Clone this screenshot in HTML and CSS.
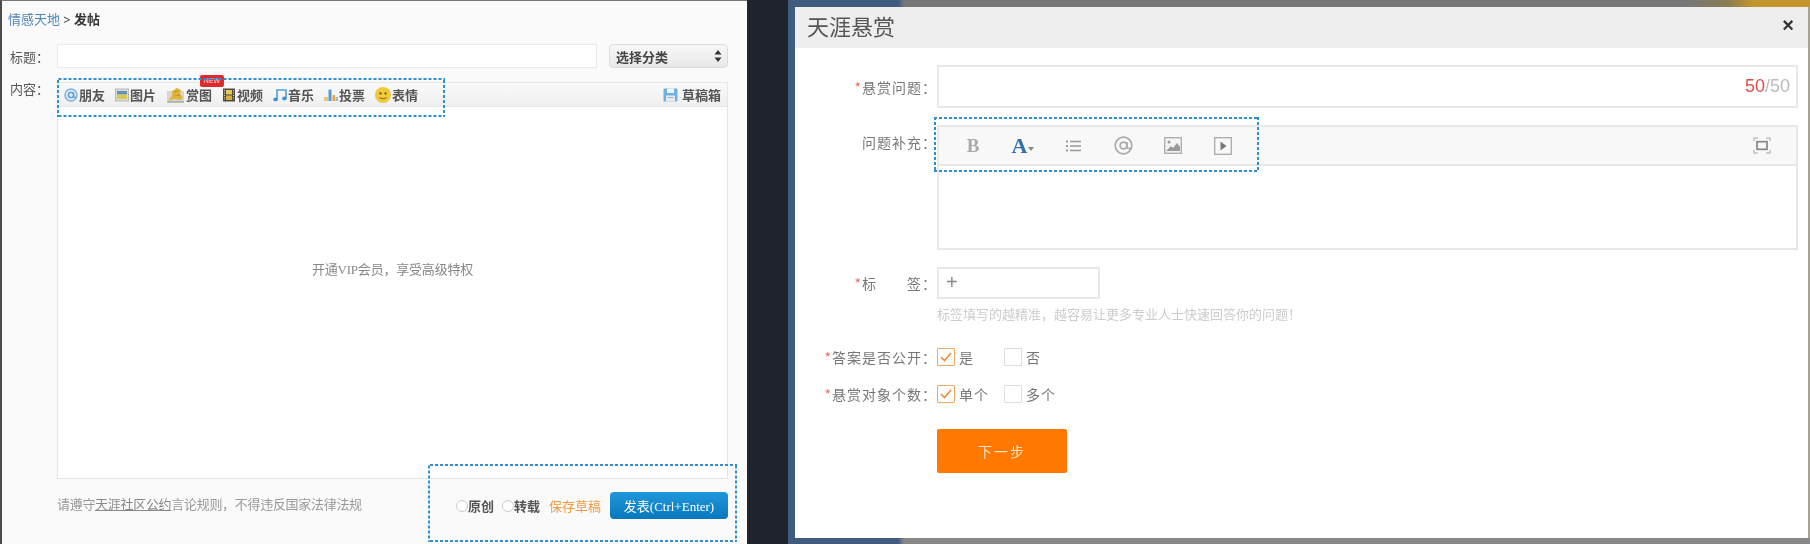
FILE: index.html
```html
<!DOCTYPE html>
<html lang="zh-CN">
<head>
    <meta charset="UTF-8">
    <meta name="viewport" content="width=device-width, initial-scale=1.0">
    <title>发帖与天涯悬赏</title>
    <link rel="stylesheet" href="styles.css">
</head>

<body>

    <div class="post-panel">
        <div class="breadcrumb"><a class="crumb-link">情感天地</a> <b>&gt; 发帖</b></div>

        <div class="post-row">
            <span class="post-label">标题&#65306;</span>
            <input type="text" class="post-title">
            <div class="category-select">
                <span>选择分类</span>
                <svg width="8" height="12" viewBox="0 0 8 12"><path d="M4 0 L7.5 4.5 H0.5 Z M4 12 L0.5 7.5 H7.5 Z" fill="#333"/></svg>
            </div>
        </div>

        <div class="post-row content-row">
            <span class="post-label">内容&#65306;</span>
            <div class="post-editor">
                <div class="post-toolbar">
                    <span class="tool">
                        <svg class="tool-icon" viewBox="0 0 14 14"><circle cx="7" cy="7" r="6" fill="#dbe9f5" stroke="#7fb4e0" stroke-width="1.5"/><circle cx="7" cy="7" r="2.6" fill="none" stroke="#5b9bd5" stroke-width="1.4"/><path d="M9.6 4.5 V8.5 Q10 10 12 9" fill="none" stroke="#5b9bd5" stroke-width="1.2"/></svg>
                        朋友
                    </span>
                    <span class="tool">
                        <svg class="tool-icon" viewBox="0 0 14 14"><rect x="0.5" y="1" width="13" height="12" fill="#d8dadc" stroke="#b5b8bb"/><rect x="2" y="3" width="10" height="3.5" fill="#5f93b8"/><rect x="2" y="6.5" width="10" height="4.5" fill="#d8c94e"/></svg>
                        图片
                    </span>
                    <span class="tool">
                        <svg class="tool-icon wide" viewBox="0 0 19 16"><rect x="1" y="4" width="17" height="11" fill="#d6d6d2"/><path d="M2 14 L6 9 L6 4 L11 1 L15 3 L14 7 L17 10 L15 13 L8 12 Z" fill="#e0b438"/><path d="M8 5 L12 4 M9 9 L14 8" stroke="#b58a22" stroke-width="0.8"/><path d="M1 15 H18" stroke="#8a8a80" stroke-width="1"/></svg>
                        赏图
                        <span class="new-badge">NEW</span>
                    </span>
                    <span class="tool">
                        <svg class="tool-icon" viewBox="0 0 14 14"><rect x="1" y="0.5" width="12" height="13" fill="#4a4a42"/><rect x="4" y="2" width="6" height="4.5" fill="#e8c65a"/><rect x="4" y="7.5" width="6" height="4.5" fill="#e0a93c"/><path d="M2.5 2 V12 M11.5 2 V12" stroke="#d8d2b8" stroke-width="1" stroke-dasharray="1.2 1.2"/></svg>
                        视频
                    </span>
                    <span class="tool">
                        <svg class="tool-icon" viewBox="0 0 14 14"><path d="M4 11 V2 H13 V10" fill="none" stroke="#4f9fe0" stroke-width="1.6"/><ellipse cx="2.6" cy="11.4" rx="2.3" ry="1.9" fill="#3d8fd8"/><ellipse cx="11.4" cy="10.4" rx="2.3" ry="1.9" fill="#3d8fd8"/></svg>
                        音乐
                    </span>
                    <span class="tool">
                        <svg class="tool-icon" viewBox="0 0 14 14"><rect x="0" y="9" width="4" height="4" fill="#e8c878"/><rect x="4.5" y="1.5" width="3" height="11.5" fill="#5a9ad8"/><rect x="8.5" y="7" width="2.5" height="6" fill="#e0a848"/><rect x="11.5" y="9" width="2.5" height="4" fill="#9cb8d8"/></svg>
                        投票
                    </span>
                    <span class="tool">
                        <svg class="tool-icon smile" viewBox="0 0 14 14"><circle cx="7" cy="7" r="7" fill="#f0c93a"/><circle cx="4.8" cy="5.6" r="1" fill="#6a5518"/><circle cx="9.2" cy="5.6" r="1" fill="#6a5518"/><path d="M4 9 Q7 11.4 10 9" fill="none" stroke="#8a6f1c" stroke-width="0.9"/></svg>
                        表情
                    </span>
                    <span class="tool draft-box">
                        <svg class="tool-icon save" viewBox="0 0 15 14"><rect x="0.5" y="0.5" width="14" height="13" rx="1" fill="#6fb0e4"/><rect x="4" y="0.5" width="7" height="4.5" fill="#f2f5f8"/><rect x="3" y="7.5" width="9" height="6" fill="#e6ebf0"/><rect x="4.5" y="9" width="6" height="1" fill="#9fb4c8"/></svg>
                        草稿箱
                    </span>
                </div>
                <div class="post-body">开通VIP会员&#65292;享受高级特权</div>
            </div>
        </div>

        <div class="post-footer">
            <span class="post-rules">请遵守<u>天涯社区公约</u>言论规则&#65292;不得违反国家法律法规</span>
            <div class="post-actions">
                <span class="radio-item"><i class="radio"></i>原创</span>
                <span class="radio-item"><i class="radio"></i>转载</span>
                <a class="save-draft">保存草稿</a>
                <button class="btn-publish" type="button">发表(Ctrl+Enter)</button>
            </div>
        </div>

        <div class="note-box note-tools"></div>
        <div class="note-box note-actions"></div>
    </div>

    <div class="backdrop">
        <div class="strip strip-top"></div>
        <div class="modal">
            <div class="modal-head">
                <span class="modal-title">天涯悬赏</span>
                <span class="modal-close">×</span>
            </div>
            <div class="modal-form">
                <div class="form-row">
                    <label class="form-label"><em>*</em>悬赏问题&#65306;</label>
                    <div class="question-box"><span class="count-used">50</span>/50</div>
                </div>

                <div class="form-row form-row-top">
                    <label class="form-label label-editor">问题补充&#65306;</label>
                    <div class="rich-editor">
                        <div class="rich-toolbar">
                            <span class="rich-tool rich-bold">B</span>
                            <span class="rich-tool rich-font">A<svg width="6" height="4" viewBox="0 0 6 4"><path d="M0 0 H6 L3 4 Z" fill="#888"/></svg></span>
                            <span class="rich-tool">
                                <svg width="17" height="14" viewBox="0 0 17 14"><path d="M5 2.5 H16 M5 7 H16 M5 11.5 H16" stroke="#999" stroke-width="1.6"/><path d="M1 2.5 H3 M1 7 H3 M1 11.5 H3" stroke="#999" stroke-width="1.8"/></svg>
                            </span>
                            <span class="rich-tool">
                                <svg width="19" height="19" viewBox="0 0 19 19"><circle cx="9.5" cy="9.5" r="8.3" fill="none" stroke="#aaa" stroke-width="1.7"/><circle cx="9.5" cy="9.5" r="3.4" fill="none" stroke="#aaa" stroke-width="1.7"/><path d="M13 6 V11 Q13.5 13.5 17 12" fill="none" stroke="#aaa" stroke-width="1.6"/></svg>
                            </span>
                            <span class="rich-tool">
                                <svg width="18" height="17" viewBox="0 0 18 17"><rect x="0.7" y="0.7" width="16.6" height="15.6" fill="#f4f4f4" stroke="#aaa" stroke-width="1.3"/><circle cx="5" cy="5" r="1.5" fill="#999"/><path d="M2 14 L7 9 L9 11 L13 6 L16 10 V14 Z" fill="#999"/></svg>
                            </span>
                            <span class="rich-tool">
                                <svg width="18" height="18" viewBox="0 0 18 18"><rect x="0.7" y="0.7" width="16.6" height="16.6" fill="none" stroke="#aaa" stroke-width="1.3"/><path d="M6.5 4.5 L12.5 9 L6.5 13.5 Z" fill="#777"/></svg>
                            </span>
                            <span class="rich-tool rich-full">
                                <svg width="18" height="17" viewBox="0 0 18 17"><path d="M1 4 V1 H5 M13 1 H17 V4 M17 13 V16 H13 M5 16 H1 V13" fill="none" stroke="#aaa" stroke-width="1.1"/><rect x="4" y="4.7" width="10" height="7.6" fill="none" stroke="#888" stroke-width="1.7"/></svg>
                            </span>
                        </div>
                    </div>
                </div>

                <div class="form-row form-row-tag">
                    <label class="form-label"><em>*</em>标&emsp;&emsp;签&#65306;</label>
                    <div class="tag-box">+</div>
                </div>
                <p class="form-hint">标签填写的越精准&#65292;越容易让更多专业人士快速回答你的问题&#65281;</p>

                <div class="form-row check-row">
                    <label class="form-label"><em>*</em>答案是否公开&#65306;</label>
                    <span class="check-item">
                        <i class="check on"><svg width="12" height="10" viewBox="0 0 12 10"><path d="M1 5 L4.5 8.5 L11 1" fill="none" stroke="#f08a3c" stroke-width="1.6"/></svg></i>是
                    </span>
                    <span class="check-item"><i class="check"></i>否</span>
                </div>
                <div class="form-row check-row check-row-second">
                    <label class="form-label"><em>*</em>悬赏对象个数&#65306;</label>
                    <span class="check-item">
                        <i class="check on"><svg width="12" height="10" viewBox="0 0 12 10"><path d="M1 5 L4.5 8.5 L11 1" fill="none" stroke="#f08a3c" stroke-width="1.6"/></svg></i>单个
                    </span>
                    <span class="check-item"><i class="check"></i>多个</span>
                </div>

                <button class="btn-next" type="button">下一步</button>
            </div>
            <div class="note-box note-rich"></div>
        </div>
        <div class="strip strip-bottom"></div>
    </div>

</body>
</html>
```

FILE: styles.css
```css
html, body {
    margin: 0;
    height: 100%;
}
body {
    display: flex;
    width: 1810px;
    height: 544px;
    overflow: hidden;
    background-color: #1f232c;
    font-family: "Liberation Serif", "Noto Sans CJK SC", serif;
    font-size: 13px;
    color: #444;
}

/* the source is a soft, scaled-up capture */
.post-panel, .modal {
    filter: blur(0.4px);
}

/* left: forum post form */
.post-panel {
    position: relative;
    box-sizing: border-box;
    flex: none;
    width: 747px;
    height: 544px;
    padding: 9px 19px 0 8px;
    background-color: #fafafa;
    border-left: 2px solid #4a4a4a;
    border-top: 1px solid #777;
}
.breadcrumb {
    margin-left: -2px;
    line-height: 20px;
    color: #333;
}
.crumb-link {
    color: #4f86b8;
}
.post-row {
    display: flex;
    align-items: center;
    margin-top: 14px;
}
.post-label {
    flex: none;
    width: 47px;
    color: #555;
}
.content-row {
    align-items: flex-start;
}
.content-row .post-label {
    line-height: 16px;
}
.post-title {
    flex: 1;
    min-width: 0;
    box-sizing: border-box;
    height: 24px;
    border: 1px solid #e8e8e8;
    background-color: white;
}
.category-select {
    display: flex;
    flex: none;
    box-sizing: border-box;
    justify-content: space-between;
    align-items: center;
    width: 119px;
    height: 24px;
    margin-left: 12px;
    padding: 0 5px 0 6px;
    border: 1px solid #ddd;
    border-radius: 4px;
    background: linear-gradient(#f8f8f8, #e8e8e8);
    color: #444;
    font-weight: bold;
}
.post-editor {
    flex: 1;
    min-width: 0;
}
.post-toolbar {
    display: flex;
    box-sizing: border-box;
    align-items: center;
    gap: 10px;
    height: 25px;
    padding: 0 6px;
    border: 1px solid #e6e6e6;
    background: linear-gradient(#fafafa, #efefef);
}
.tool {
    position: relative;
    display: flex;
    align-items: center;
    gap: 1px;
    font-weight: bold;
    color: #555;
}
.tool-icon {
    width: 14px;
    height: 14px;
}
.tool-icon.wide {
    width: 19px;
    height: 16px;
}
.tool-icon.smile {
    width: 16px;
    height: 16px;
}
.tool-icon.save {
    width: 15px;
}
.new-badge {
    position: absolute;
    left: 34px;
    top: -10px;
    width: 24px;
    height: 12px;
    border-radius: 2px;
    background-color: #dc2a2e;
    color: #fbdcdc;
    font-family: "Liberation Sans", sans-serif;
    font-size: 7px;
    line-height: 12px;
    text-align: center;
    font-weight: normal;
}
.draft-box {
    gap: 4px;
    margin-left: auto;
}
.post-body {
    box-sizing: border-box;
    height: 372px;
    padding-top: 153px;
    border: 1px solid #e4e4e4;
    border-top: none;
    background-color: white;
    color: #888;
    line-height: 20px;
    letter-spacing: -0.2px;
    text-align: center;
}
.post-footer {
    display: flex;
    justify-content: space-between;
    align-items: center;
    margin: 13px 0 0 47px;
}
.post-rules {
    margin-bottom: 4px;
    letter-spacing: -0.3px;
    color: #999;
}
.post-rules u {
    color: #888;
}
.post-actions {
    display: flex;
    align-items: center;
    gap: 9px;
}
.radio-item {
    display: flex;
    align-items: center;
    font-weight: bold;
    color: #555;
}
.radio-item + .radio-item {
    margin-left: -1px;
}
.radio {
    box-sizing: border-box;
    width: 12px;
    height: 12px;
    border: 1px solid #ccc;
    border-radius: 50%;
    background-color: white;
}
.save-draft {
    color: #f59a3f;
}
.btn-publish {
    width: 118px;
    height: 27px;
    padding: 0;
    border: none;
    border-radius: 4px;
    background: linear-gradient(#1f97dc, #0878bd);
    color: white;
    font-family: inherit;
    font-size: 13px;
}

/* dashed call-outs drawn over the screenshots */
.note-box {
    position: absolute;
    background-image:
        linear-gradient(to right, #2c90d2 60%, transparent 60%),
        linear-gradient(to right, #2c90d2 60%, transparent 60%),
        linear-gradient(to bottom, #2c90d2 60%, transparent 60%),
        linear-gradient(to bottom, #2c90d2 60%, transparent 60%);
    background-size: 5px 2px, 5px 2px, 2px 5px, 2px 5px;
    background-position: top, bottom, left, right;
    background-repeat: repeat-x, repeat-x, repeat-y, repeat-y;
    pointer-events: none;
}
.note-tools {
    left: 55px;
    top: 77px;
    width: 388px;
    height: 39px;
}
.note-actions {
    left: 426px;
    top: 463px;
    width: 309px;
    height: 78px;
}
.note-rich {
    left: 139px;
    top: 110px;
    width: 325px;
    height: 55px;
}

/* right: reward dialog on a dimmed page */
.backdrop {
    display: flex;
    flex-direction: column;
    flex: none;
    width: 1022px;
    height: 544px;
    margin-left: 41px;
    background-color: #3f5b7e;
}
.strip {
    flex: none;
}
.strip-top {
    height: 7px;
    background: linear-gradient(to right, #3f5b7e 110px, #777 116px, #777 900px, #8a7c50 940px, #c2952e 965px);
}
.strip-bottom {
    height: 6px;
    background: linear-gradient(to right, #3f5b7e 110px, #888 116px);
}
.modal {
    position: relative;
    flex: 1;
    margin: 0 2px 0 7px;
    background-color: white;
    box-shadow: 2px 0 0 #a8a294;
    font-family: "Noto Sans CJK SC", sans-serif;
    font-size: 14px;
    color: #777;
}
.modal-head {
    display: flex;
    box-sizing: border-box;
    justify-content: space-between;
    align-items: center;
    height: 41px;
    padding: 0 14px 5px 12px;
    background-color: #eeeeee;
}
.modal-title {
    font-size: 22px;
    color: #555;
}
.modal-close {
    font-family: "Liberation Sans", sans-serif;
    font-size: 20px;
    font-weight: bold;
    color: #333;
}
.modal-form {
    padding: 17px 10px 0 0;
}
.form-row {
    display: flex;
    align-items: center;
}
.form-row-top {
    align-items: flex-start;
    margin-top: 17px;
}
.form-row-tag {
    margin-top: 17px;
}
.form-label {
    flex: none;
    width: 142px;
    letter-spacing: 1px;
    text-align: right;
}
.form-label em {
    color: #f26a5e;
    font-style: normal;
}
.label-editor {
    line-height: 34px;
}
.question-box {
    flex: 1;
    box-sizing: border-box;
    height: 43px;
    padding-right: 6px;
    border: 2px solid #e8e8e8;
    font-family: "Liberation Sans", sans-serif;
    font-size: 18px;
    line-height: 39px;
    text-align: right;
    color: #bbb;
}
.count-used {
    color: #e0504a;
}
.rich-editor {
    flex: 1;
    box-sizing: border-box;
    height: 125px;
    border: 2px solid #e8e8e8;
}
.rich-toolbar {
    display: flex;
    box-sizing: border-box;
    height: 39px;
    padding: 0 9px;
    border-bottom: 2px solid #e8e8e8;
    background-color: #f8f8f8;
}
.rich-tool {
    display: flex;
    justify-content: center;
    align-items: center;
    width: 50px;
}
.rich-bold {
    font-family: "Liberation Serif", serif;
    font-size: 19px;
    font-weight: bold;
    color: #aaa;
}
.rich-font {
    gap: 1px;
    font-family: "Liberation Serif", serif;
    font-size: 22px;
    font-weight: bold;
    color: #2f70ad;
}
.rich-font svg {
    margin-top: 6px;
}
.rich-full {
    margin-left: auto;
}
.tag-box {
    box-sizing: border-box;
    width: 163px;
    height: 32px;
    padding-left: 7px;
    border: 2px solid #e8e8e8;
    font-family: "Liberation Sans", sans-serif;
    font-size: 20px;
    line-height: 27px;
    color: #888;
}
.form-hint {
    margin: 5px 0 0 142px;
    font-size: 13px;
    line-height: 20px;
    color: #ccc;
}
.check-row {
    height: 20px;
    margin-top: 23px;
}
.check-row-second {
    margin-top: 17px;
}
.check-item {
    display: flex;
    align-items: center;
    gap: 4px;
    width: 67px;
    letter-spacing: 1px;
}
.check {
    display: flex;
    flex: none;
    box-sizing: border-box;
    justify-content: center;
    align-items: center;
    width: 18px;
    height: 18px;
    border: 1.5px solid #ddd;
    border-radius: 1px;
}
.check.on {
    border-color: #f0a868;
}
.btn-next {
    display: block;
    width: 130px;
    height: 44px;
    margin: 25px 0 0 142px;
    padding: 0;
    border: none;
    border-radius: 2px;
    background-color: #ff7800;
    color: #ffe3c8;
    font-family: inherit;
    font-size: 14px;
    letter-spacing: 2px;
}
```
